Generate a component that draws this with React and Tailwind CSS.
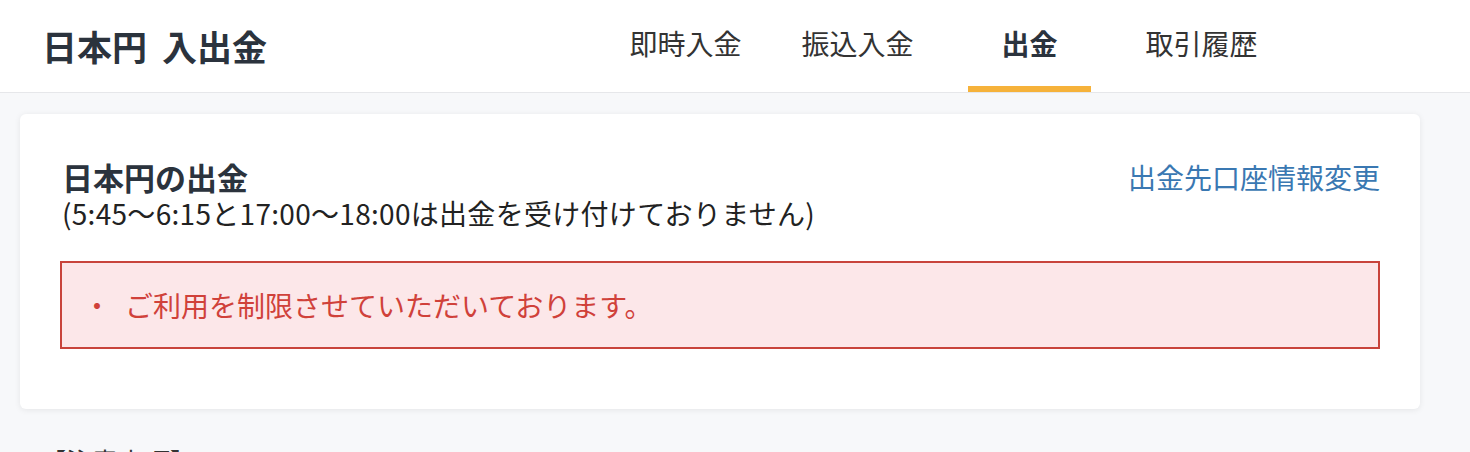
import React from 'react';

const tabs = [
  { label: '即時入金', active: false },
  { label: '振込入金', active: false },
  { label: '出金', active: true },
  { label: '取引履歴', active: false },
];

const font = { fontFamily: '"Noto Sans CJK JP", "Noto Sans", sans-serif' };

export default function App() {
  return (
    <div className="min-h-screen bg-[#f7f8fa] text-[#222]" style={font}>
      <header className="flex h-[93px] items-stretch border-b border-[#e6e7ea] bg-white">
        <h1 className="flex items-center gap-[15px] pl-[42px] text-[35px] font-bold text-[#2b333d]">
          <span>日本円</span>
          <span>入出金</span>
        </h1>
        <nav className="ml-auto mr-[207px] flex gap-[49px]">
          {tabs.map((tab) => (
            <div
              key={tab.label}
              className={`flex w-[123px] items-center justify-center border-b-[6px] text-[28px] ${
                tab.active
                  ? 'border-[#f6b23a] font-bold text-[#2b333d]'
                  : 'border-transparent text-[#333]'
              }`}
            >
              {tab.label}
            </div>
          ))}
        </nav>
      </header>

      <main className="px-[20px] pt-[21px]">
        <section className="w-[1400px] rounded-[6px] bg-white px-[40px] pb-[60px] pt-[44px] shadow-[0_1px_6px_rgba(0,0,0,0.08)]">
          <div className="flex items-start justify-between pl-[2px]">
            <div className="flex flex-col">
              <h2 className="text-[31px] font-bold leading-[38px] text-[#2b333d]">日本円の出金</h2>
              <p className="text-[28px] leading-[34px] tracking-[0.3px] text-[#222]">
                (5:45〜6:15と17:00〜18:00は出金を受け付けておりません)
              </p>
            </div>
            <a href="#" className="text-[28px] leading-[38px] text-[#3a78b2]">
              出金先口座情報変更
            </a>
          </div>
          <div className="mt-[31px] border-2 border-[#c8443c] bg-[#fce7e9] px-[21px] py-[24px]">
            <p className="flex gap-[14px] text-[28px] leading-[36px] text-[#d0413a]">
              <span>・</span>
              <span>ご利用を制限させていただいております。</span>
            </p>
          </div>
        </section>
        <p className="mt-[32px] pl-[20px] text-[26px] text-[#333]">【注意事項】</p>
      </main>
    </div>
  );
}
